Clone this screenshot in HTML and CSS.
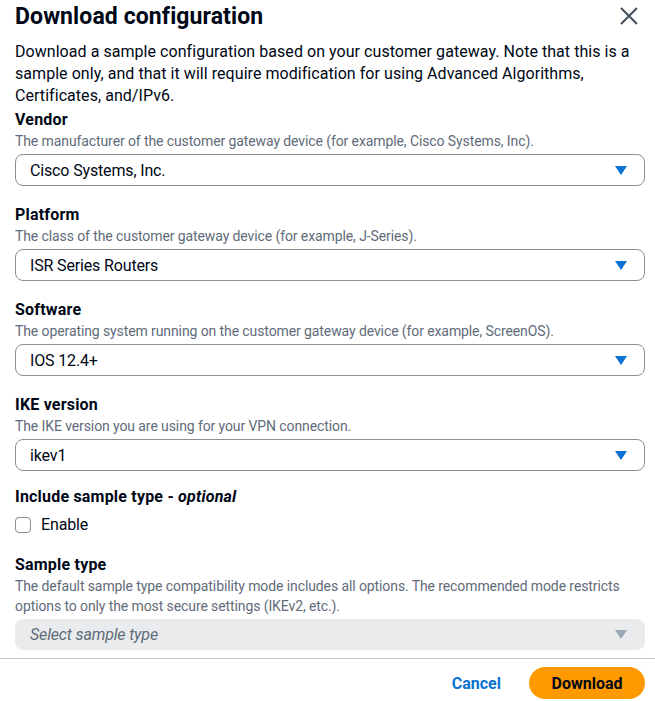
FILE: index.html
```html
<!DOCTYPE html>
<html>
<head>
<meta charset="utf-8">
<link rel="stylesheet" href="styles.css">
</head>
<body>
<div class="modal">
  <div class="header">
    <h2 class="title">Download configuration</h2>
    <button class="close" aria-label="Close">
      <svg width="20" height="20" viewBox="0 0 20 20"><path d="M2 2 L18 18 M18 2 L2 18" stroke="#414d5c" stroke-width="2" fill="none"/></svg>
    </button>
  </div>
  <div class="body">
    <p class="intro">Download a sample configuration based on your customer gateway. Note that this is a sample only, and that it will require modification for using Advanced Algorithms, Certificates, and/IPv6.</p>
    <div class="field first">
      <div class="label">Vendor</div>
      <div class="desc">The manufacturer of the customer gateway device (for example, Cisco Systems, Inc).</div>
      <div class="select"><span>Cisco Systems, Inc.</span><span class="caret"></span></div>
    </div>
    <div class="field">
      <div class="label">Platform</div>
      <div class="desc">The class of the customer gateway device (for example, J-Series).</div>
      <div class="select"><span>ISR Series Routers</span><span class="caret"></span></div>
    </div>
    <div class="field">
      <div class="label">Software</div>
      <div class="desc">The operating system running on the customer gateway device (for example, ScreenOS).</div>
      <div class="select"><span>IOS 12.4+</span><span class="caret"></span></div>
    </div>
    <div class="field">
      <div class="label">IKE version</div>
      <div class="desc">The IKE version you are using for your VPN connection.</div>
      <div class="select"><span>ikev1</span><span class="caret"></span></div>
    </div>
    <div class="field optional">
      <div class="label">Include sample type - <i>optional</i></div>
      <label class="check"><span class="box"></span>Enable</label>
    </div>
    <div class="field sample">
      <div class="label">Sample type</div>
      <div class="desc">The default sample type compatibility mode includes all options. The recommended mode restricts options to only the most secure settings (IKEv2, etc.).</div>
      <div class="select disabled"><span>Select sample type</span><span class="caret"></span></div>
    </div>
  </div>
  <div class="footer">
    <button class="link">Cancel</button>
    <button class="primary">Download</button>
  </div>
</div>
</body>
</html>
```
FILE: styles.css
```css
* { box-sizing: border-box; }
html, body { margin: 0; padding: 0; background: #fff; }
body { font-family: Roboto, "Open Sans", sans-serif; color: #000716; width: 655px; height: 701px; overflow: hidden; }
.modal { display: flex; flex-direction: column; }
.header { display: flex; justify-content: space-between; align-items: center; padding: 0 16px 0 15px; height: 32px; }
.title { margin: 0; font-size: 23px; font-weight: 700; letter-spacing: 0.1px; }
.close { background: none; border: 0; padding: 0; display: flex; }
.body { padding: 0 10px 0 15px; }
.intro { margin: 9px 0 0 0; font-size: 16px; line-height: 22px; letter-spacing: 0.05px; }
.field { margin-top: 18px; }
.field.first { margin-top: 2px; }
.field.optional { margin-top: 15px; }
.field.sample { margin-top: 18px; }
.label { font-size: 16px; font-weight: 700; line-height: 22px; letter-spacing: 0.2px; }
.label i { font-weight: 700; }
.desc { font-size: 14px; line-height: 20px; color: #5f6b7a; letter-spacing: -0.1px; }
.select { margin-top: 3px; height: 32px; border: 1px solid #8c8c94; border-radius: 8px; display: flex; align-items: center; justify-content: space-between; padding: 0 17px 0 14px; font-size: 16px; letter-spacing: -0.15px; }
.caret { width: 0; height: 0; border-left: 6px solid transparent; border-right: 6px solid transparent; border-top: 9px solid #0972d3; }
.select.disabled { height: 31px; background: #e9ebed; border-color: #e9ebed; color: #5f6b7a; font-style: italic; }
.select.disabled .caret { border-top-color: #9ba7b6; }
.check { display: flex; align-items: center; gap: 10px; font-size: 16px; line-height: 22px; margin-top: 6px; letter-spacing: -0.15px; }
.box { width: 16px; height: 16px; border: 1px solid #8c8c94; border-radius: 4px; }
.footer { margin-top: 8px; border-top: 1px solid #c6c6cd; display: flex; justify-content: flex-end; align-items: center; gap: 28px; padding: 8px 10px 0 0; }
.link { background: none; border: 0; font-family: inherit; font-size: 16px; font-weight: 700; color: #0972d3; padding: 0; }
.primary { background: #ff9900; border: 0; border-radius: 20px; height: 32px; width: 116px; font-family: inherit; font-size: 16px; font-weight: 700; color: #000716; }
```
